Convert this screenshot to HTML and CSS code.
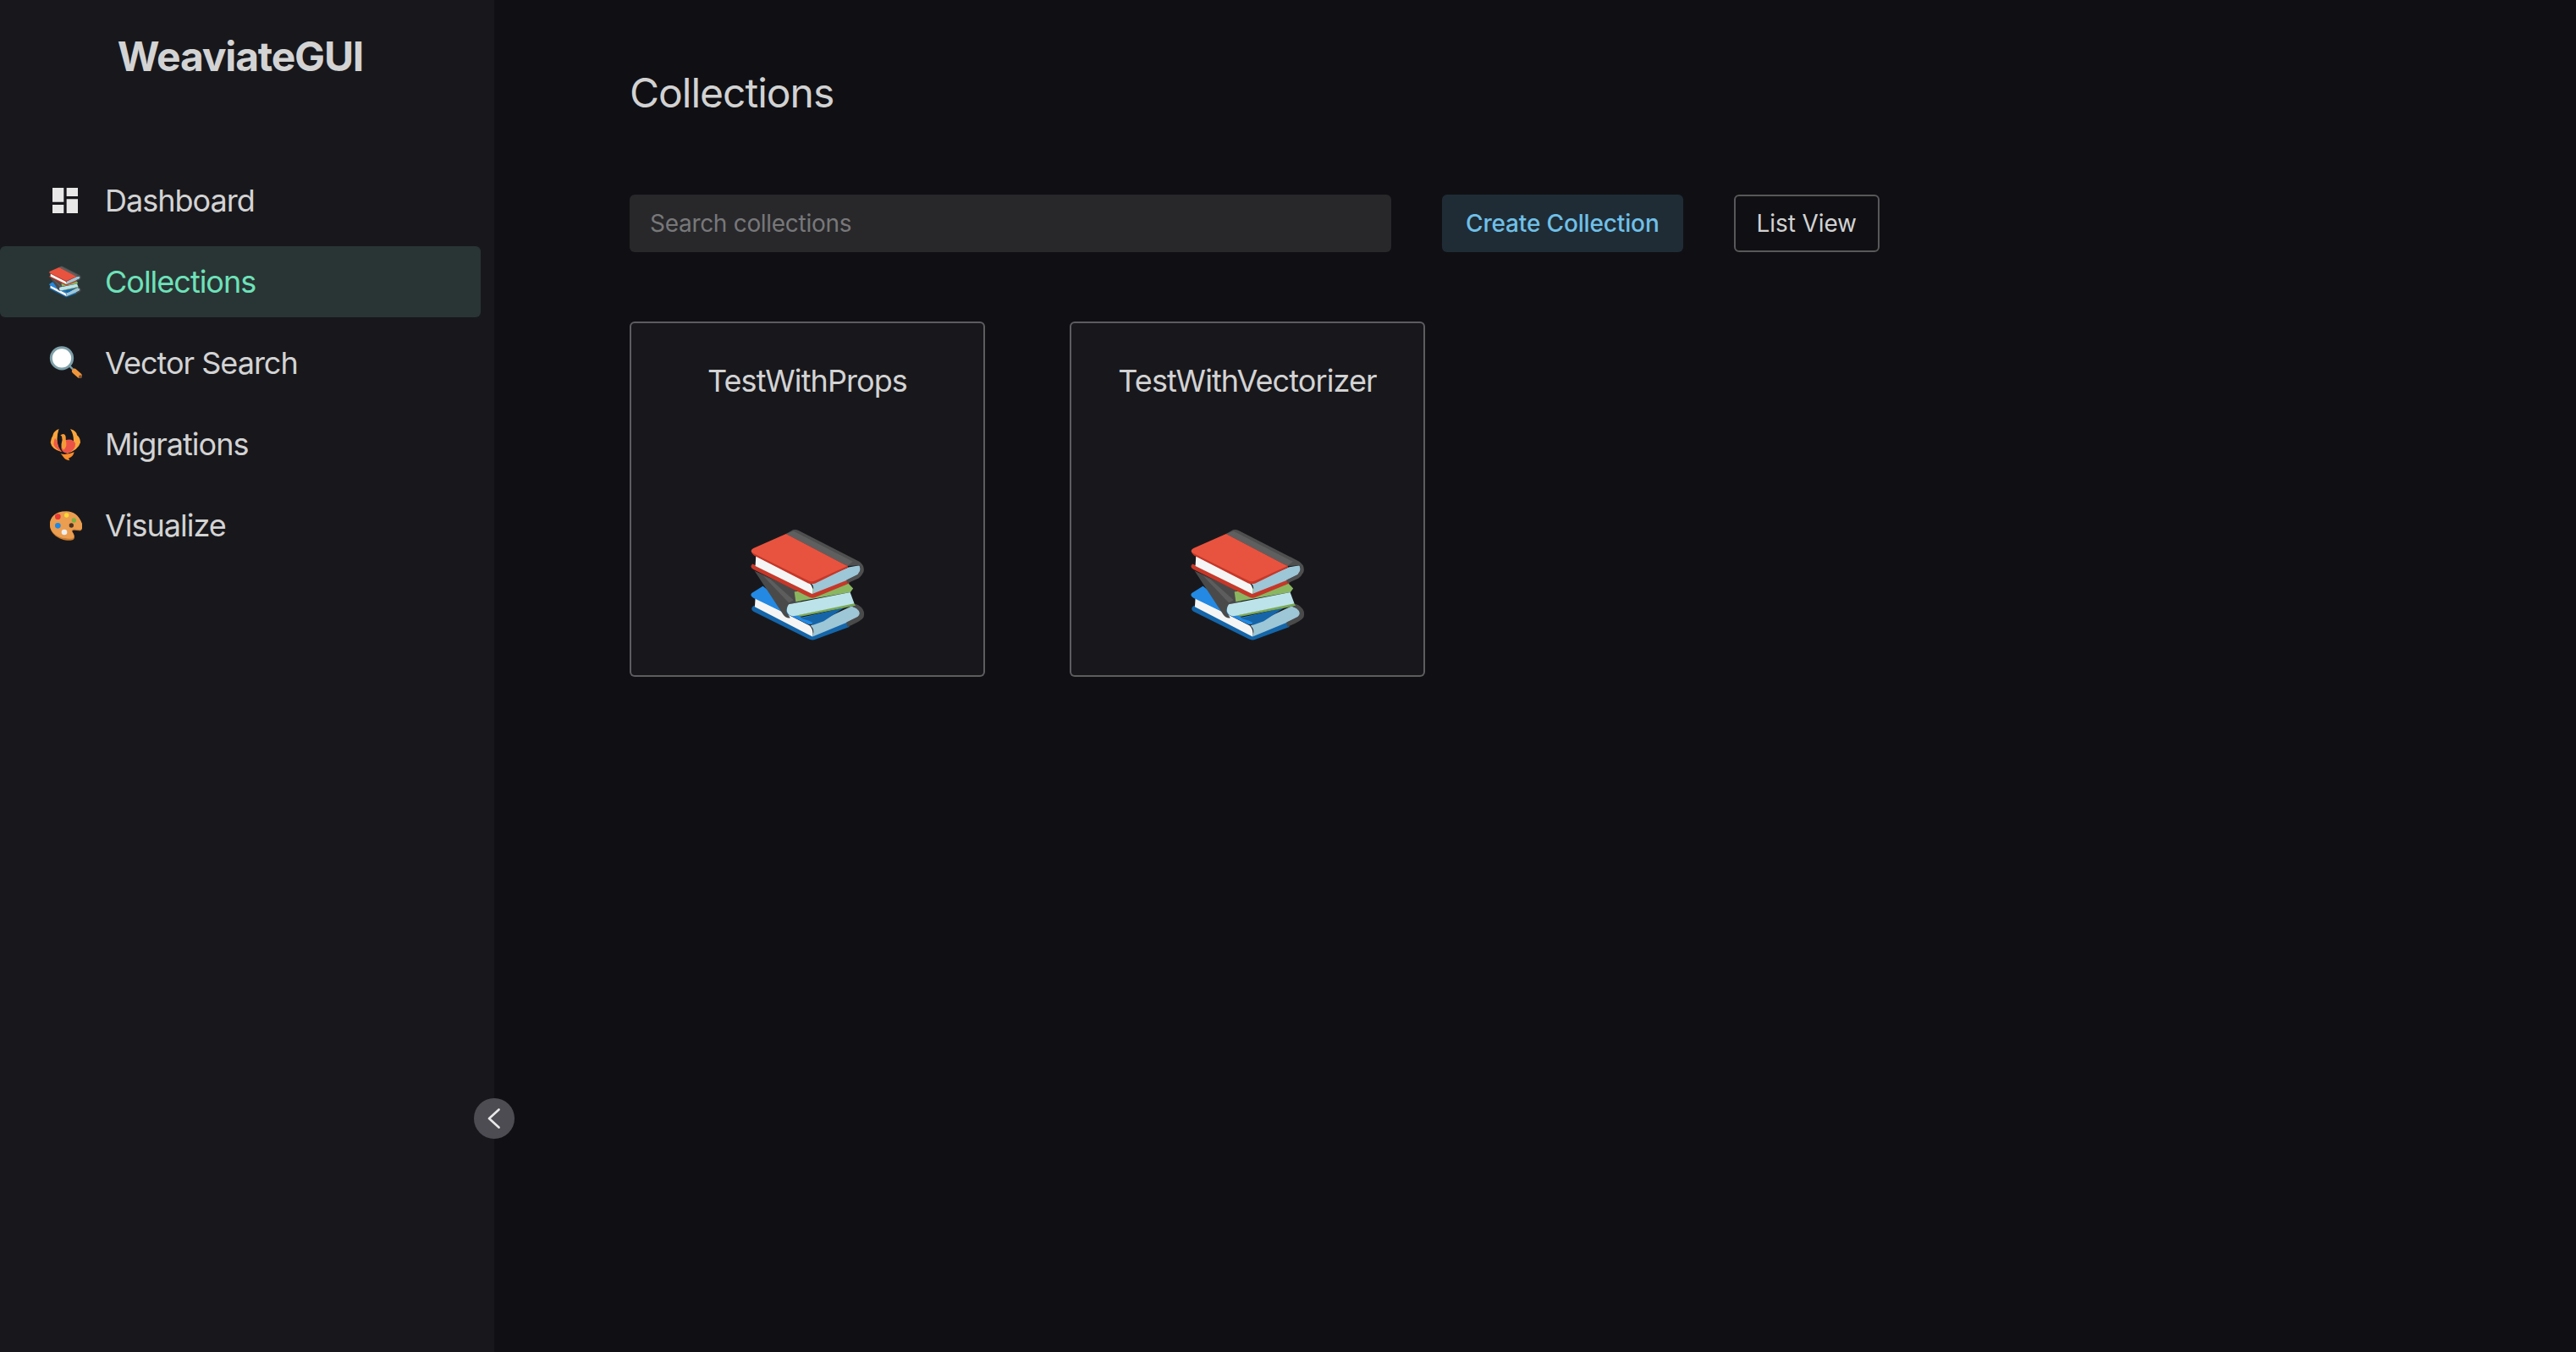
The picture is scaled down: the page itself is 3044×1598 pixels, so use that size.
FILE: index.html
```html
<!DOCTYPE html>
<html lang="en">
<head>
    <meta charset="UTF-8">
    <meta name="viewport" content="width=device-width, initial-scale=1.0">
    <title>WeaviateGUI</title>
    <link rel="stylesheet" href="styles.css">
</head>
<body>

<svg class="sprite" width="0" height="0">
  <symbol id="books" viewBox="78 44 410 404">
    <!-- bottom book -->
    <path fill="#1565a8" d="M90 320L298 425L430 376L432 396L310 441Q298 446 285 439L88 341Q74 330 90 320Z"/>
    <path fill="#f5f5f5" d="M95 292L290 392Q306 408 300 431L93 324Z"/>
    <path fill="#9dc6d6" d="M300 431Q310 405 292 392L440 322L466 330Q480 345 470 358L425 380Z"/>
    <path fill="#4a4a4a" d="M440 308L465 318Q492 335 483 362Q474 376 425 396L422 380L462 360Q478 345 458 330L440 322Z"/>
    <path fill="#2389e3" d="M82 275L122 250L260 362L400 332L300 386Q290 390 280 385L88 292Q74 284 82 275Z"/>
    <path fill="#1565a8" d="M258 366L416 326L340 376L300 390Q312 378 258 366Z"/>
    <!-- middle book -->
    <path fill="#4a4a4a" d="M92 195L240 262L258 305L218 315Q204 326 208 345L220 364Q205 366 195 352Z"/>
    <path fill="#5d5d5d" d="M122 212L150 226L232 300L215 310Z"/>
    <path fill="#8ab661" d="M235 270L425 236L446 258L436 272L240 306Z"/>
    <path fill="#7aa955" d="M240 355L448 310L455 320L258 359Z"/>
    <path fill="#bce3ea" d="M215 315L435 272L450 312L240 356Q216 362 208 340Q208 322 215 315Z"/>
    <!-- top book -->
    <path fill="#c53829" d="M85 170L297 276L428 226L432 240L310 290Q298 295 285 288L88 190Q72 180 85 170Z"/>
    <path fill="#f5f5f5" d="M97 142L290 240Q306 255 299 278L95 178Z"/>
    <path fill="#9dc6d6" d="M299 278Q310 252 295 240L430 182L468 175Q478 195 465 208L420 230Z"/>
    <path fill="#4f4f4f" d="M205 62L230 48Q240 45 250 50L465 160Q490 175 483 200Q475 215 465 222L425 240L422 228L462 208Q478 190 468 175L425 178Z"/>
    <path fill="#5f5f5f" d="M205 62L232 52L445 162L425 178Z"/>
    <path fill="#c53829" d="M80 122Q82 135 90 140L285 240Q298 245 310 240L428 182L425 174L310 228Q298 234 288 228Z"/>
    <path fill="#e8533f" d="M205 62L425 178L310 230Q296 236 285 230L88 132Q72 124 88 114Z"/>
  </symbol>
  <symbol id="lens" viewBox="36 27 120 120">
    <path fill="none" stroke="#7d9fa8" stroke-width="7" d="M112 98L126 112"/>
    <circle cx="84" cy="70" r="38" fill="#fff" stroke="#7d9fa8" stroke-width="9"/>
    <path fill="none" stroke="#f0963a" stroke-width="18" stroke-linecap="round" d="M129 116L146 131"/>
    <circle cx="150" cy="136" r="6" fill="#7a5038"/>
  </symbol>
  <symbol id="phoenix" viewBox="36 12 120 120">
    <path fill="#fba53c" d="M74 18Q54 26 52 42Q46 50 44 66Q48 90 84 100Q70 86 68 62Q66 40 74 18Z"/>
    <path fill="#ee5a44" d="M60 50Q50 74 62 84Q72 94 86 100Q70 84 68 62Z"/>
    <path fill="#fba53c" d="M114 18Q136 24 138 40Q150 50 150 66Q142 94 100 106Q122 84 126 60Q126 36 114 18Z"/>
    <path fill="#ec5347" d="M96 58Q124 50 132 70Q134 92 106 104Q84 102 82 86Q84 70 96 58Z"/>
    <path fill="#f59a38" d="M88 36Q96 36 98 46Q98 58 100 68Q102 84 90 92Q80 84 83 70Q88 56 84 44L79 40Z"/>
    <path fill="#fb8c2c" d="M80 106Q100 112 128 100Q124 118 108 122L112 130Q96 128 90 118Q86 112 80 106Z"/>
  </symbol>
  <symbol id="palette" viewBox="36 18 120 120">
    <path fill="#c97a30" d="M100 30C60 30 42 52 42 77C42 107 75 133 115 131C135 130 130 112 122 102C118 94 130 94 145 97C155 99 160 87 155 72C145 44 125 30 100 30Z"/>
    <path fill="#eb9d50" d="M100 28C60 28 42 50 42 75C42 105 75 127 115 125C133 124 128 110 120 100C116 90 130 90 145 93C155 95 160 85 155 70C145 42 125 28 100 28Z"/>
    <circle cx="118" cy="78" r="8" fill="#4a3325"/>
    <circle cx="70" cy="47" r="10" fill="#e53935"/>
    <circle cx="101" cy="42" r="8" fill="#fdd835"/>
    <circle cx="127" cy="60" r="8" fill="#7cb342"/>
    <circle cx="70" cy="79" r="10" fill="#1e88e5"/>
    <circle cx="93" cy="102" r="10" fill="#eeeeee"/>
  </symbol>
</svg>

<div class="layout">
  <aside class="sidebar">
    <div class="logo">WeaviateGUI</div>
    <nav class="nav">
      <a class="nav-item" href="#">
        <span class="nav-icon">
          <svg class="dash-icon" viewBox="3 3 18 18"><path fill="#e8e8e8" d="M3 13h8V3H3v10zm0 8h8v-6H3v6zm10 0h8V11h-8v10zm0-18v6h8V3h-8z"/></svg>
        </span>
        Dashboard
      </a>
      <a class="nav-item active" href="#">
        <span class="nav-icon"><svg class="emoji emoji-books"><use href="#books"/></svg></span>
        Collections
      </a>
      <a class="nav-item" href="#">
        <span class="nav-icon"><svg class="emoji"><use href="#lens"/></svg></span>
        Vector Search
      </a>
      <a class="nav-item" href="#">
        <span class="nav-icon"><svg class="emoji"><use href="#phoenix"/></svg></span>
        Migrations
      </a>
      <a class="nav-item" href="#">
        <span class="nav-icon"><svg class="emoji"><use href="#palette"/></svg></span>
        Visualize
      </a>
    </nav>
    <button class="collapse" type="button" aria-label="Collapse sidebar">
      <svg viewBox="0 0 24 24"><path fill="none" stroke="#e8e8e8" stroke-width="2.6" stroke-linecap="round" stroke-linejoin="round" d="M17.500 1.500L6 12l11.500 10.500"/></svg>
    </button>
  </aside>

  <main class="content">
    <h1>Collections</h1>

    <div class="toolbar">
      <input class="search" type="text" placeholder="Search collections">
      <button class="btn btn-create" type="button">Create Collection</button>
      <button class="btn btn-view" type="button">List View</button>
    </div>

    <div class="cards">
      <div class="card">
        <div class="card-title">TestWithProps</div>
        <svg class="card-icon"><use href="#books"/></svg>
      </div>
      <div class="card">
        <div class="card-title">TestWithVectorizer</div>
        <svg class="card-icon"><use href="#books"/></svg>
      </div>
    </div>
  </main>
</div>

</body>
</html>
```

FILE: styles.css
```css
* {
    box-sizing: border-box;
}
body {
    font-family: 'Inter', 'Liberation Sans', sans-serif;
    background: #101014;
    color: rgba(255, 255, 255, 0.82);
    margin: 0;
}
.sprite {
    position: absolute;
}
.layout {
    display: flex;
    height: 100vh;
    overflow: hidden;
}

/* sidebar */
.sidebar {
    position: relative;
    flex: 0 0 584px;
    background: #18181c;
    padding: 32px 16px 0 0;
}
.logo {
    height: 70px;
    line-height: 70px;
    margin-bottom: 93px;
    text-align: center;
    font-size: 48px;
    font-weight: 700;
    letter-spacing: -1.2px;
}
.nav {
    display: flex;
    flex-direction: column;
    gap: 12px;
}
.nav-item {
    display: flex;
    align-items: center;
    height: 84px;
    padding-left: 57px;
    border-radius: 6px;
    color: rgba(255, 255, 255, 0.82);
    font-size: 36px;
    letter-spacing: -1px;
    text-decoration: none;
}
.nav-item.active {
    background: #293534;
    color: #6ee2ba;
}
.nav-icon {
    display: flex;
    justify-content: center;
    align-items: center;
    flex: 0 0 40px;
    height: 40px;
    margin-right: 27px;
}
.dash-icon {
    width: 30px;
    height: 30px;
}
.emoji {
    width: 40px;
    height: 40px;
}
.emoji-books {
    width: 38px;
    height: 38px;
}
.collapse {
    position: absolute;
    top: 1298px;
    right: -24px;
    display: flex;
    justify-content: center;
    align-items: center;
    width: 48px;
    height: 48px;
    padding: 0;
    border: none;
    border-radius: 50%;
    background: #4c4c52;
}
.collapse svg {
    width: 24px;
    height: 24px;
}

/* main */
.content {
    flex: 1;
    padding: 80px 0 0 160px;
}
h1 {
    margin: 0 0 90px;
    font-size: 48px;
    line-height: 60px;
    font-weight: 400;
    letter-spacing: -1px;
}
.toolbar {
    display: flex;
    gap: 60px;
    margin-bottom: 82px;
}
.search {
    width: 900px;
    height: 68px;
    padding: 0 24px;
    border: none;
    border-radius: 6px;
    outline: none;
    background: rgba(255, 255, 255, 0.1);
    color: rgba(255, 255, 255, 0.82);
    font-family: inherit;
    font-size: 28px;
    letter-spacing: -0.3px;
}
.search::placeholder {
    color: rgba(255, 255, 255, 0.38);
}
.btn {
    height: 68px;
    padding: 0 28px;
    border-radius: 6px;
    font-family: inherit;
    font-size: 28px;
}
.btn-create {
    border: none;
    background: rgba(112, 192, 232, 0.16);
    color: #70c0e8;
    font-weight: 500;
    letter-spacing: -0.15px;
}
.btn-view {
    padding: 0 25px;
    border: 2px solid rgba(255, 255, 255, 0.3);
    background: transparent;
    color: rgba(255, 255, 255, 0.82);
    letter-spacing: -0.1px;
}
.cards {
    display: flex;
    gap: 100px;
}
.card {
    display: flex;
    flex-direction: column;
    align-items: center;
    width: 420px;
    height: 420px;
    padding: 46px 0 40px;
    border: 2px solid rgba(255, 255, 255, 0.3);
    border-radius: 6px;
    background: #18181c;
}
.card-title {
    font-size: 36px;
    line-height: 44px;
    letter-spacing: -0.9px;
}
.card-icon {
    width: 135px;
    height: 133px;
    margin-top: auto;
}
```
